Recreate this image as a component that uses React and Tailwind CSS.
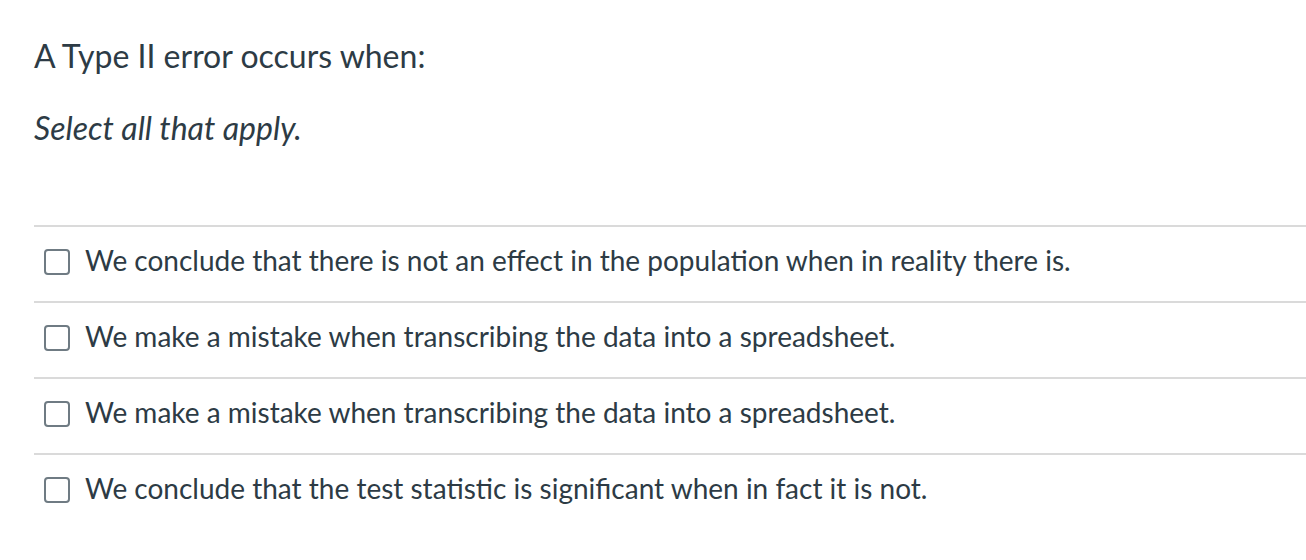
import React from "react";

const options = [
  "We conclude that there is not an effect in the population when in reality there is.",
  "We make a mistake when transcribing the data into a spreadsheet.",
  "We make a mistake when transcribing the data into a spreadsheet.",
  "We conclude that the test statistic is significant when in fact it is not.",
];

export default function App() {
  return (
    <div className="w-[1306px] h-[560px] bg-white text-[#2d3b45] font-['Lato',sans-serif] pl-[34px] pt-[32px] overflow-hidden">
      <p className="text-[32px] leading-[48px]">A Type II error occurs when:</p>
      <p className="text-[32px] leading-[48px] italic mt-[24px]">Select all that apply.</p>
      <div className="mt-[73px]">
        {options.map((o, i) => (
          <label
            key={i}
            className="flex items-center h-[76px] border-t-2 border-[#dadada] pl-[10px] pb-[4px]"
          >
            <span className="w-[26px] h-[26px] border-2 border-[#6f7b83] rounded-[4px] shrink-0 bg-white" />
            <span className="ml-[15px] text-[28px] leading-[42px] mb-[4px]">{o}</span>
          </label>
        ))}
      </div>
    </div>
  );
}
